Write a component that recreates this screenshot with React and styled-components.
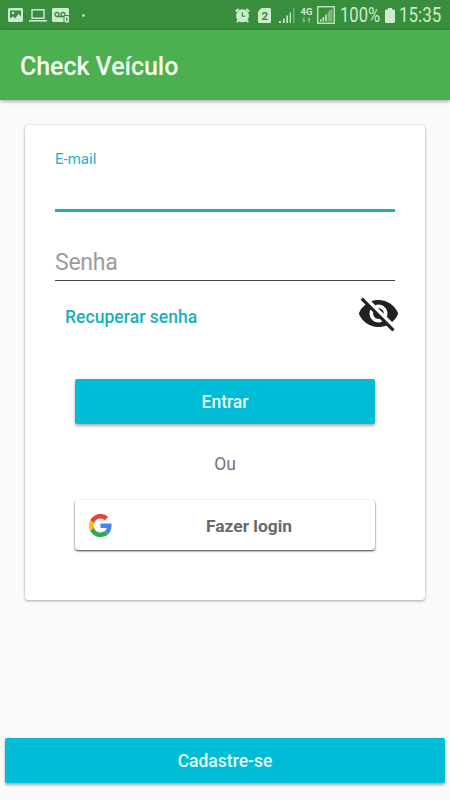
import React, { useState } from 'react';
import styled, { createGlobalStyle } from 'styled-components';
import { MdVisibilityOff } from 'react-icons/md';

const GlobalStyle = createGlobalStyle`
  * { box-sizing: border-box; }
  body {
    margin: 0;
    background: #fafafa;
    font-family: Roboto, "Noto Sans", sans-serif;
  }
  button, input { font-family: inherit; }
`;

const Screen = styled.div`
  display: flex;
  flex-direction: column;
  width: 450px;
  height: 800px;
  overflow: hidden;
  background: #fafafa;
`;

const StatusBar = styled.div`
  display: flex;
  flex: none;
  align-items: center;
  height: 30px;
  padding: 0 10px 0 8px;
  background: #388e3c;
  color: #cdeccd;

  svg { display: block; flex: none; }
`;

const StatusItem = styled.div`
  display: flex;
  flex: none;
  margin-left: ${({ $gap }) => $gap || 0}px;
`;

const StatusText = styled.span`
  flex: none;
  width: ${({ $width }) => $width}px;
  margin-left: ${({ $gap }) => $gap}px;
  padding-top: 1px;
  font-size: 19.5px;
  line-height: 29px;
  white-space: nowrap;
  transform: scaleX(${({ $scale }) => $scale});
  transform-origin: left center;
`;

const Spacer = styled.div`
  flex: 1;
`;

const Network = styled.div`
  display: flex;
  flex: none;
  flex-direction: column;
  align-items: center;
  width: 13px;
  height: 17px;
  margin-left: 5px;
  font-size: 9.5px;
  font-weight: 700;
  line-height: 10px;
`;

const AppBar = styled.header`
  display: flex;
  flex: none;
  align-items: center;
  height: 70px;
  padding: 2px 20px 0;
  background: #4caf50;
  box-shadow: 0 1px 4px rgba(0, 0, 0, 0.4);
`;

const Title = styled.h1`
  margin: 0;
  color: #f4fff4;
  font-size: 25px;
  font-weight: 500;
  letter-spacing: -0.05px;
`;

const Card = styled.main`
  display: flex;
  flex: none;
  flex-direction: column;
  width: 400px;
  height: 475px;
  margin: 25px 25px 0;
  padding: 24px 30px 0;
  border-radius: 3px;
  background: #fff;
  box-shadow: 0 1px 3px rgba(0, 0, 0, 0.32), 0 0 1px rgba(0, 0, 0, 0.25);
`;

const Label = styled.label`
  height: 20px;
  color: #18b4c4;
  font-size: 15px;
  line-height: 20px;
`;

const Input = styled.input`
  flex: none;
  width: 100%;
  height: ${({ $height }) => $height}px;
  margin-top: ${({ $gap }) => $gap || 0}px;
  padding: 2px 0 0;
  border: 0;
  border-bottom: ${({ $active }) => ($active ? '3px solid #22adba' : '1px solid #444')};
  border-radius: 0;
  outline: none;
  background: transparent;
  color: #333;
  font-size: 23px;
  letter-spacing: -0.25px;

  &::placeholder { color: #9c9c9c; opacity: 1; }
`;

const Actions = styled.div`
  display: flex;
  flex: none;
  align-items: center;
  justify-content: space-between;
  height: 70px;
  margin-right: -5px;
  padding-left: 10px;
`;

const TextButton = styled.button`
  padding: 2px 0 0;
  border: 0;
  background: none;
  color: #18b0bd;
  font-size: 17.5px;
  font-weight: 500;
  letter-spacing: 0.05px;
`;

const EyeButton = styled.button`
  display: flex;
  padding: 0 0 6px;
  border: 0;
  background: none;
  color: #212121;
`;

const Button = styled.button`
  display: flex;
  flex: none;
  align-items: center;
  justify-content: center;
  height: 45px;
  margin: ${({ $margin }) => $margin};
  padding: 0;
  border: 0;
  border-radius: 2px;
  background: #00bcd7;
  color: #e6fdff;
  font-size: 17.5px;
  font-weight: 500;
  box-shadow: 0 2px 3px rgba(0, 0, 0, 0.32);
`;

const Divider = styled.p`
  flex: none;
  margin: 0;
  height: 76px;
  padding-top: 2px;
  color: #737373;
  font-size: 17.5px;
  line-height: 76px;
  text-align: center;
`;

const GoogleButton = styled.button`
  display: flex;
  flex: none;
  align-items: center;
  height: 50px;
  margin: 0 20px;
  padding: 0 0 0 14px;
  border: 0;
  border-radius: 3px;
  background: #fff;
  box-shadow: 0 1px 2px rgba(0, 0, 0, 0.65), 0 1px 2px rgba(0, 0, 0, 0.25);
`;

const GoogleText = styled.span`
  flex: 1;
  padding: 2px 0 0 11px;
  color: #696969;
  font-size: 17.4px;
  font-weight: 700;
  text-align: center;
`;

const PictureIcon = () => (
  <svg width="15" height="14" viewBox="0 0 15 14">
    <path fill="currentColor" d="M1 0h13l1 1v12l-1 1H1l-1-1V1z" />
    <path fill="#388e3c" d="M2 2.5h11v6.3l-2.3-3-3.4 4.4-2.6-1.8L2 10.5z" />
    <circle cx="5" cy="5" r="1.3" fill="currentColor" />
  </svg>
);

const LaptopIcon = () => (
  <svg width="18" height="13" viewBox="0 0 18 13">
    <path fill="none" stroke="currentColor" strokeWidth="1.4" d="M3 9.3V.7h12v8.6z" />
    <path fill="currentColor" d="M0 11h18v1.6H0z" />
  </svg>
);

const VoicemailIcon = () => (
  <svg width="18" height="15" viewBox="0 0 18 15">
    <path fill="currentColor" d="M1 0h15l1 1v12l-1 1H1l-1-1V1z" />
    <g fill="none" stroke="#388e3c" strokeWidth="1.3">
      <circle cx="5" cy="6.5" r="2" />
      <circle cx="11" cy="6.5" r="2" />
      <path d="M5 8.7h6" />
    </g>
    <rect x="11.5" y="7" width="6" height="8" rx="1" fill="#388e3c" />
    <rect x="12.5" y="8" width="4.5" height="6.5" rx="1" fill="currentColor" />
    <path fill="#388e3c" d="M14.2 9.5h1.2v3.5h-1.2z" />
  </svg>
);

const AlarmIcon = () => (
  <svg width="15" height="15" viewBox="0 0 15 15">
    <circle cx="7.5" cy="7.8" r="6.5" fill="currentColor" />
    <path
      fill="none"
      stroke="currentColor"
      strokeWidth="2"
      d="M.7 3.4l3-2.5M14.3 3.4l-3-2.5M3.5 12.2l-1.7 1.9M11.5 12.2l1.7 1.9"
    />
    <path fill="none" stroke="#388e3c" strokeWidth="1.3" d="M7.3 4.3v3.9h3" />
  </svg>
);

const SimIcon = () => (
  <svg width="13" height="15" viewBox="0 0 13 15">
    <path fill="currentColor" d="M3.5 0H12l1 1v13l-1 1H1l-1-1V3.5z" />
    <text x="6.7" y="11.6" fill="#388e3c" fontSize="11.5" fontWeight="700" textAnchor="middle">2</text>
  </svg>
);

const SignalIcon = () => (
  <svg width="16" height="15" viewBox="0 0 16 15">
    <path fill="currentColor" d="M0 13h2v2H0zM4 10.5h1.6V15H4zM7.4 7.5h1.6V15H7.4z" />
    <path fill="currentColor" opacity=".9" d="M10.6 4.5h1.4V15h-1.4z" />
    <path fill="currentColor" opacity=".4" d="M14 0h1.4v15H14z" />
  </svg>
);

const ArrowsIcon = () => (
  <svg width="9" height="6" viewBox="0 0 9 6" opacity=".5">
    <path fill="currentColor" d="M1.2 0h1.4v3h1.2L1.9 6 0 3h1.2zM6.4 6h1.4V3H9L7.1 0 5.2 3h1.2z" />
  </svg>
);

const BoxedSignalIcon = () => (
  <svg width="18" height="18" viewBox="0 0 18 18">
    <rect x=".75" y=".75" width="16.5" height="16.5" fill="none" stroke="currentColor" strokeWidth="1.3" />
    <path fill="currentColor" d="M3 13.3h1.6v2.2H3zM5.6 11h1.5v4.5H5.6zM8.2 8.5h1.6v7H8.2z" />
    <path fill="currentColor" opacity=".45" d="M10.7 6L15.5 2.5v13h-4.8z" />
  </svg>
);

const BatteryIcon = () => (
  <svg width="10" height="15" viewBox="0 0 10 15">
    <path fill="currentColor" d="M3 0h4v1.6h2l1 1V14l-1 1H1l-1-1V2.6l1-1h2z" />
  </svg>
);

const GoogleIcon = () => (
  <svg width="23" height="23" viewBox="0 0 48 48">
    <path fill="#EA4335" d="M24 9.5c3.54 0 6.71 1.22 9.21 3.6l6.85-6.85C35.9 2.38 30.47 0 24 0 14.62 0 6.51 5.38 2.56 13.22l7.98 6.19C12.43 13.72 17.74 9.5 24 9.5z" />
    <path fill="#4285F4" d="M46.98 24.55c0-1.57-.15-3.09-.38-4.55H24v9.02h12.94c-.58 2.96-2.26 5.48-4.78 7.18l7.73 6c4.51-4.18 7.09-10.36 7.09-17.65z" />
    <path fill="#FBBC05" d="M10.53 28.59c-.48-1.45-.76-2.99-.76-4.59s.27-3.14.76-4.59l-7.98-6.19C.92 16.46 0 20.12 0 24c0 3.88.92 7.54 2.56 10.78l7.97-6.19z" />
    <path fill="#34A853" d="M24 48c6.48 0 11.93-2.13 15.89-5.81l-7.73-6c-2.15 1.45-4.92 2.3-8.16 2.3-6.26 0-11.57-4.22-13.47-9.91l-7.98 6.19C6.51 42.62 14.62 48 24 48z" />
  </svg>
);

const DotIcon = () => (
  <svg width="3" height="3" viewBox="0 0 3 3">
    <circle cx="1.5" cy="1.5" r="1.3" fill="currentColor" />
  </svg>
);

const App = () => {
  const [email, setEmail] = useState('');
  const [password, setPassword] = useState('');
  const [visible, setVisible] = useState(false);

  return (
    <Screen>
      <GlobalStyle />
      <StatusBar>
        <StatusItem><PictureIcon /></StatusItem>
        <StatusItem $gap={6}><LaptopIcon /></StatusItem>
        <StatusItem $gap={5}><VoicemailIcon /></StatusItem>
        <StatusItem $gap={12}><DotIcon /></StatusItem>
        <Spacer />
        <StatusItem><AlarmIcon /></StatusItem>
        <StatusItem $gap={8}><SimIcon /></StatusItem>
        <StatusItem $gap={8}><SignalIcon /></StatusItem>
        <Network>
          4G
          <ArrowsIcon />
        </Network>
        <StatusItem $gap={4}><BoxedSignalIcon /></StatusItem>
        <StatusText $gap={5} $width={40} $scale={0.85}>100%</StatusText>
        <StatusItem $gap={5}><BatteryIcon /></StatusItem>
        <StatusText $gap={4} $width={41} $scale={0.87}>15:35</StatusText>
      </StatusBar>

      <AppBar>
        <Title>Check Veículo</Title>
      </AppBar>

      <Card>
        <Label htmlFor="email">E-mail</Label>
        <Input
          id="email"
          $active
          $height={43}
          value={email}
          onChange={(e) => setEmail(e.target.value)}
        />
        <Input
          type={visible ? 'text' : 'password'}
          placeholder="Senha"
          $height={39}
          $gap={30}
          value={password}
          onChange={(e) => setPassword(e.target.value)}
        />
        <Actions>
          <TextButton>Recuperar senha</TextButton>
          <EyeButton onClick={() => setVisible(!visible)}>
            <MdVisibilityOff size={43} />
          </EyeButton>
        </Actions>
        <Button $margin="28px 20px 0">Entrar</Button>
        <Divider>Ou</Divider>
        <GoogleButton>
          <GoogleIcon />
          <GoogleText>Fazer login</GoogleText>
        </GoogleButton>
      </Card>

      <Button $margin="auto 5px 17px">Cadastre-se</Button>
    </Screen>
  );
};

export default App;
